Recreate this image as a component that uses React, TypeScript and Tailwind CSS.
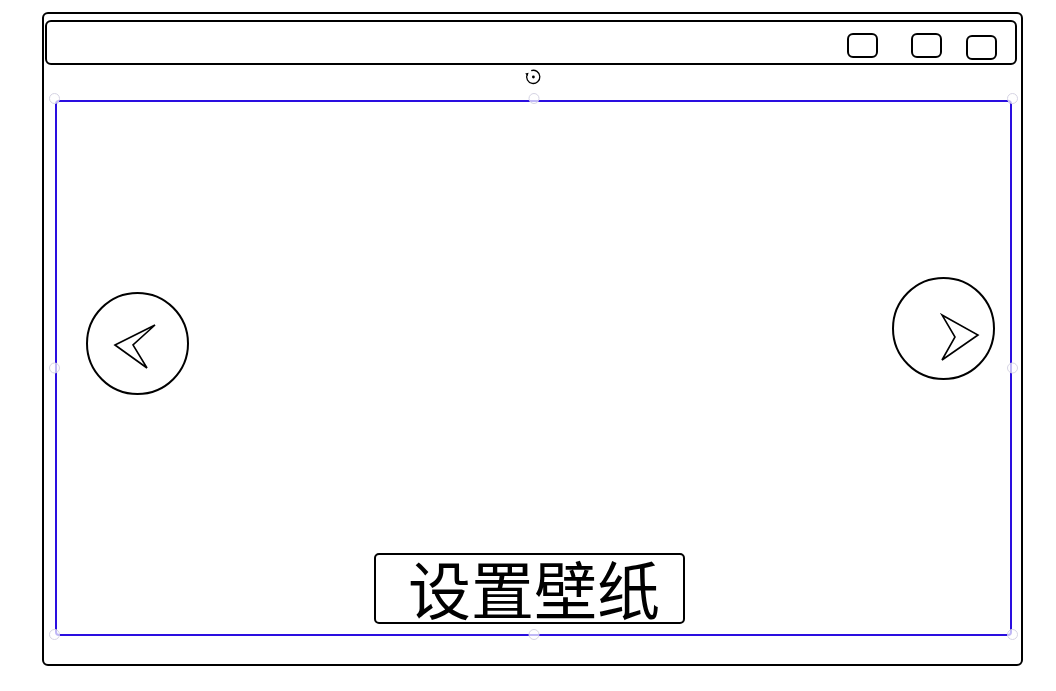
import React from 'react';

// small gray selection handle sitting on the blue frame
const Handle = ({ className }: { className: string }) => (
  <div className={`absolute w-[11px] h-[11px] rounded-full border border-[#d6d4e4] bg-white/70 ${className}`} />
);

const WinButton = ({ className = '' }: { className?: string }) => (
  <div className={`w-[31px] h-[25px] border-2 border-black rounded-[6px] ${className}`} />
);

export default function App() {
  return (
    <div className="w-[1056px] h-[691px] bg-white overflow-hidden" style={{ fontFamily: '"Noto Sans CJK SC", "Noto Sans", sans-serif' }}>
      {/* outer window */}
      <div className="ml-[42px] mt-[12px] w-[981px] h-[654px] border-2 border-black rounded-[6px] pt-[6px] flex flex-col">
        {/* title bar */}
        <div className="ml-[1px] w-[972px] h-[45px] border-2 border-black rounded-[6px] flex justify-end items-start pt-[11px] pr-[18px]">
          <WinButton />
          <WinButton className="ml-[33px]" />
          <WinButton className="ml-[24px] mt-[2px]" />
        </div>

        {/* rotate handle */}
        <div className="mt-[3px] h-[16px] flex justify-center">
          <svg width="18" height="18" viewBox="0 0 18 18" fill="none">
            <path d="M3.2 6.2 A6.6 6.6 0 1 0 7.2 2.6" stroke="black" strokeWidth="1.3" />
            <path d="M1.2 5.4 L4.6 4.8 L3.6 8 Z" fill="black" />
            <circle cx="9.4" cy="9" r="1.4" fill="black" />
          </svg>
        </div>

        {/* selected content frame */}
        <div className="relative ml-[11px] mt-[16px] w-[957px] h-[536px] border-2 border-[#2a0ee0] rounded-[4px] flex flex-col">
          <Handle className="-left-[8px] -top-[9px]" />
          <Handle className="left-1/2 -translate-x-1/2 -top-[9px]" />
          <Handle className="-right-[8px] -top-[9px]" />
          <Handle className="-left-[8px] top-1/2 -translate-y-1/2" />
          <Handle className="-right-[8px] top-1/2 -translate-y-1/2" />
          <Handle className="-left-[8px] -bottom-[6px]" />
          <Handle className="left-1/2 -translate-x-1/2 -bottom-[6px]" />
          <Handle className="-right-[8px] -bottom-[6px]" />

          <div className="flex justify-between items-start pl-[29px] pr-[15px]">
            {/* previous */}
            <div className="mt-[190px] w-[103px] h-[103px] rounded-full border-2 border-black">
              <svg width="99" height="99" viewBox="0 0 99 99" fill="none">
                <path d="M27 51 L67 31 L45 51 L59 74 Z" stroke="black" strokeWidth="1.6" strokeLinejoin="miter" />
              </svg>
            </div>
            {/* next */}
            <div className="mt-[175px] w-[103px] h-[103px] rounded-full border-2 border-black">
              <svg width="99" height="99" viewBox="0 0 99 99" fill="none">
                <path d="M48 36 L84 56 L48 81 L61 58 Z" stroke="black" strokeWidth="1.6" strokeLinejoin="miter" />
              </svg>
            </div>
          </div>

          <div className="mt-auto mb-[10px] ml-[317px] w-[311px] h-[71px] border-2 border-black rounded-[5px] flex items-center pl-[32px] pb-[4px]">
            <span className="text-[63px] leading-none text-black">设置壁纸</span>
          </div>
        </div>
      </div>
    </div>
  );
}
